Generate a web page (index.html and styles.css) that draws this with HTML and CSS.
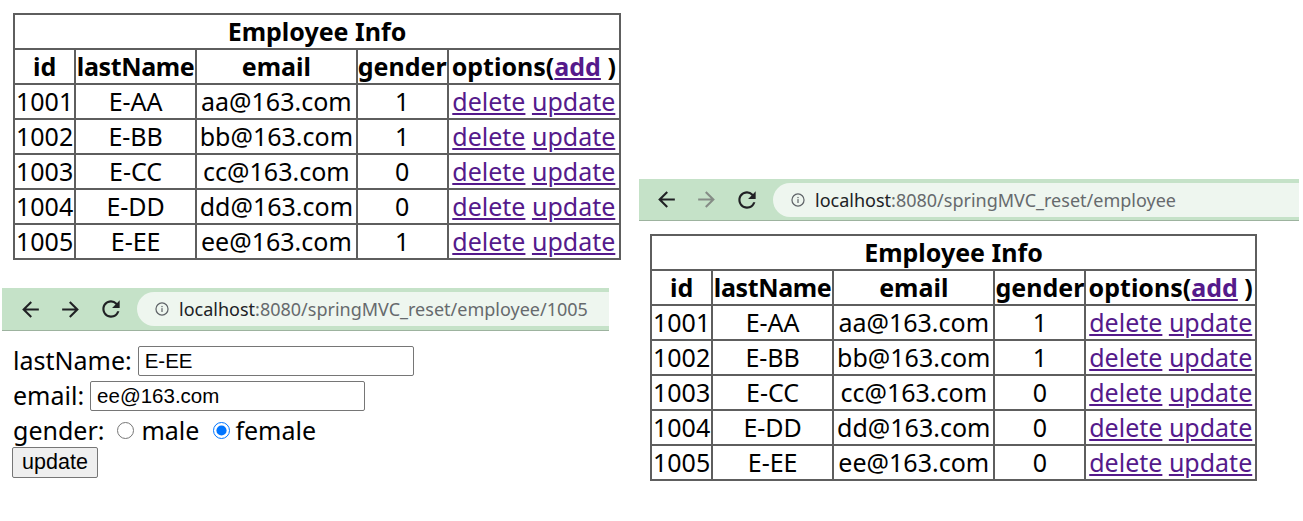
FILE: index.html
```html
<!DOCTYPE html>
<html>
<head>
<meta charset="utf-8">
<link rel="stylesheet" href="styles.css">
</head>
<body>
<div class="page">
  <div class="left">
    <table class="emp">
      <tr><th colspan="5" class="cap">Employee Info</th></tr>
      <tr><th class="c1">id</th><th class="c2">lastName</th><th class="c3">email</th><th class="c4">gender</th><th class="c5">options(<a href="#" class="lnk">add</a> )</th></tr>
      <tr><td>1001</td><td>E-AA</td><td>aa@163.com</td><td>1</td><td><a href="#" class="lnk">delete</a> <a href="#" class="lnk">update</a></td></tr>
      <tr><td>1002</td><td>E-BB</td><td>bb@163.com</td><td>1</td><td><a href="#" class="lnk">delete</a> <a href="#" class="lnk">update</a></td></tr>
      <tr><td>1003</td><td>E-CC</td><td>cc@163.com</td><td>0</td><td><a href="#" class="lnk">delete</a> <a href="#" class="lnk">update</a></td></tr>
      <tr><td>1004</td><td>E-DD</td><td>dd@163.com</td><td>0</td><td><a href="#" class="lnk">delete</a> <a href="#" class="lnk">update</a></td></tr>
      <tr><td>1005</td><td>E-EE</td><td>ee@163.com</td><td>1</td><td><a href="#" class="lnk">delete</a> <a href="#" class="lnk">update</a></td></tr>
    </table>

    <div class="bar bar-left">
      <svg class="ico" viewBox="0 0 24 24"><path d="M20 11H7.83l5.59-5.59L12 4l-8 8 8 8 1.41-1.41L7.830 13H20v-2z"/></svg>
      <svg class="ico" viewBox="0 0 24 24"><path d="M4 11h12.17l-5.59-5.59L12 4l8 8-8 8-1.41-1.41L16.17 13H4v-2z"/></svg>
      <svg class="ico reload" viewBox="0 0 24 24"><path d="M17.65 6.35A7.958 7.958 0 0 0 12 4c-4.42 0-7.99 3.58-7.99 8s3.57 8 7.99 8c3.73 0 6.84-2.55 7.73-6h-2.08A5.99 5.99 0 0 1 12 18c-3.31 0-6-2.69-6-6s2.69-6 6-6c1.66 0 3.14.69 4.22 1.78L13 11h7V4l-2.35 2.35z"/></svg>
      <div class="pill">
        <svg class="info" viewBox="0 0 16 16"><circle cx="8" cy="8" r="6.9" fill="none" stroke="#5f6368" stroke-width="1.4"/><rect x="7.3" y="7" width="1.4" height="4.4" fill="#5f6368"/><rect x="7.3" y="4.5" width="1.4" height="1.4" fill="#5f6368"/></svg>
        <span class="url"><span class="host">localhost</span>:8080/springMVC_reset/employee/1005</span>
      </div>
    </div>

    <form class="form">
      <div class="frow r1"><span>lastName:</span><input type="text" class="inp inp-name" value="E-EE"></div>
      <div class="frow r2"><span>email:</span><input type="text" class="inp inp-mail" value="ee@163.com"></div>
      <div class="frow r3"><span>gender:</span><input type="radio" name="g" class="rad"><span class="rlab">male</span><input type="radio" name="g" class="rad rad2" checked><span class="rlab">female</span></div>
      <div class="frow r4"><button type="button" class="btn">update</button></div>
    </form>
  </div>

  <div class="right">
    <div class="bar bar-right">
      <svg class="ico" viewBox="0 0 24 24"><path d="M20 11H7.83l5.59-5.59L12 4l-8 8 8 8 1.41-1.41L7.83 13H20v-2z"/></svg>
      <svg class="ico disabled" viewBox="0 0 24 24"><path d="M4 11h12.17l-5.59-5.59L12 4l8 8-8 8-1.41-1.41L16.17 13H4v-2z"/></svg>
      <svg class="ico reload" viewBox="0 0 24 24"><path d="M17.65 6.35A7.958 7.958 0 0 0 12 4c-4.42 0-7.99 3.58-7.99 8s3.57 8 7.99 8c3.73 0 6.84-2.55 7.73-6h-2.08A5.99 5.99 0 0 1 12 18c-3.31 0-6-2.69-6-6s2.69-6 6-6c1.66 0 3.14.69 4.22 1.78L13 11h7V4l-2.35 2.35z"/></svg>
      <div class="pill">
        <svg class="info" viewBox="0 0 16 16"><circle cx="8" cy="8" r="6.9" fill="none" stroke="#5f6368" stroke-width="1.4"/><rect x="7.3" y="7" width="1.4" height="4.4" fill="#5f6368"/><rect x="7.3" y="4.5" width="1.4" height="1.4" fill="#5f6368"/></svg>
        <span class="url"><span class="host">localhost</span>:8080/springMVC_reset/employee</span>
      </div>
    </div>

    <table class="emp emp-right">
      <tr><th colspan="5" class="cap">Employee Info</th></tr>
      <tr><th class="c1">id</th><th class="c2">lastName</th><th class="c3">email</th><th class="c4">gender</th><th class="c5">options(<a href="#" class="lnk">add</a> )</th></tr>
      <tr><td>1001</td><td>E-AA</td><td>aa@163.com</td><td>1</td><td><a href="#" class="lnk">delete</a> <a href="#" class="lnk">update</a></td></tr>
      <tr><td>1002</td><td>E-BB</td><td>bb@163.com</td><td>1</td><td><a href="#" class="lnk">delete</a> <a href="#" class="lnk">update</a></td></tr>
      <tr><td>1003</td><td>E-CC</td><td>cc@163.com</td><td>0</td><td><a href="#" class="lnk">delete</a> <a href="#" class="lnk">update</a></td></tr>
      <tr><td>1004</td><td>E-DD</td><td>dd@163.com</td><td>0</td><td><a href="#" class="lnk">delete</a> <a href="#" class="lnk">update</a></td></tr>
      <tr><td>1005</td><td>E-EE</td><td>ee@163.com</td><td>0</td><td><a href="#" class="lnk">delete</a> <a href="#" class="lnk">update</a></td></tr>
    </table>
  </div>
</div>
</body>
</html>
```

FILE: styles.css
```css
html, body {
  margin: 0;
  padding: 0;
  background: #ffffff;
}

body {
  font-family: "Noto Sans", "Open Sans", "Noto Sans CJK SC", sans-serif;
  color: #000000;
  font-size: 25px;
}

.page {
  display: flex;
  align-items: flex-start;
}

.left {
  width: 607px;
  padding-left: 2px;
  padding-top: 13px;
}

.right {
  width: 660px;
  margin-left: 30px;
  padding-top: 179px;
}

/* tables */
.emp {
  border: 1px solid #5e5e5e;
  border-spacing: 0;
  margin-left: 11px;
  width: 608px;
}

.emp-right {
  margin-top: 13px;
  width: 607px;
}

.emp th,
.emp td {
  box-sizing: border-box;
  border: 1px solid #5e5e5e;
  padding: 0 1px;
  height: 35px;
  line-height: 31px;
  text-align: center;
  white-space: nowrap;
  font-size: 25px;
}

.emp td:first-child {
  text-align: left;
}

.emp th {
  font-weight: 700;
  padding: 0;
}

.emp th.c2 {
  letter-spacing: -0.35px;
}

.c1 { width: 61px; }
.c2 { width: 121px; }
.c3 { width: 161px; }
.c4 { width: 90px; }
.c5 { width: 173px; }

.emp-right .c1 { width: 60px; }
.emp-right .c3 { width: 162px; }
.emp-right .c4 { width: 91px; }
.emp-right .c5 { width: 171px; }

.lnk {
  color: #551a8b;
  text-decoration: underline;
}

/* browser bar */
.bar {
  display: flex;
  align-items: center;
  height: 42px;
  background: #c5e2c8;
  border-bottom: 1px solid #9db39f;
  overflow: hidden;
}

.bar-left {
  width: 591px;
  padding-left: 16px;
  margin-top: 28px;
}

.bar-right {
  width: 645px;
  height: 41px;
  padding-left: 15px;
}

.ico {
  width: 25px;
  height: 25px;
  fill: #202124;
  flex: none;
  margin-right: 15px;
}

.ico.disabled {
  fill: #858c86;
}

.ico.reload {
  width: 26px;
  height: 26px;
  margin-right: 13px;
}

.pill {
  flex: 1;
  display: flex;
  align-items: center;
  height: 34px;
  background: #eef6ef;
  border-radius: 17px;
  padding-left: 18px;
  margin-right: -30px;
}

.info {
  width: 14px;
  height: 14px;
  flex: none;
  margin-right: 10px;
}

.url {
  font-family: "Noto Sans", "Open Sans", sans-serif;
  font-size: 18px;
  color: #666a6d;
  white-space: nowrap;
}

.host {
  color: #202124;
}

/* form */
.form {
  padding-left: 11px;
  padding-top: 12px;
}

.frow {
  height: 35px;
  line-height: 35px;
  font-size: 25px;
  display: flex;
  align-items: center;
  white-space: nowrap;
}

.frow.r3 {
  height: 34px;
}

.frow.r4 {
  align-items: flex-start;
}

.inp {
  font-family: "Liberation Sans", Arial, sans-serif;
  font-size: 20.5px;
  height: 30px;
  box-sizing: border-box;
  border: 1px solid #767676;
  border-radius: 2px;
  padding: 0 6px;
  margin: 0 0 0 6px;
  color: #000;
}

.inp-name { width: 276px; }
.inp-mail { width: 275px; }

.rad {
  width: 17px;
  height: 17px;
  margin: 0 7px 0 13px;
}

.rad2 {
  margin-left: 14px;
  margin-right: 5px;
}

.btn {
  font-family: "Liberation Sans", Arial, sans-serif;
  font-size: 21.5px;
  width: 86px;
  height: 31px;
  padding: 0;
  margin: 0 0 0 -1px;
  background: #efefef;
  border: 1px solid #767676;
  border-radius: 2px;
  color: #000;
}
```
